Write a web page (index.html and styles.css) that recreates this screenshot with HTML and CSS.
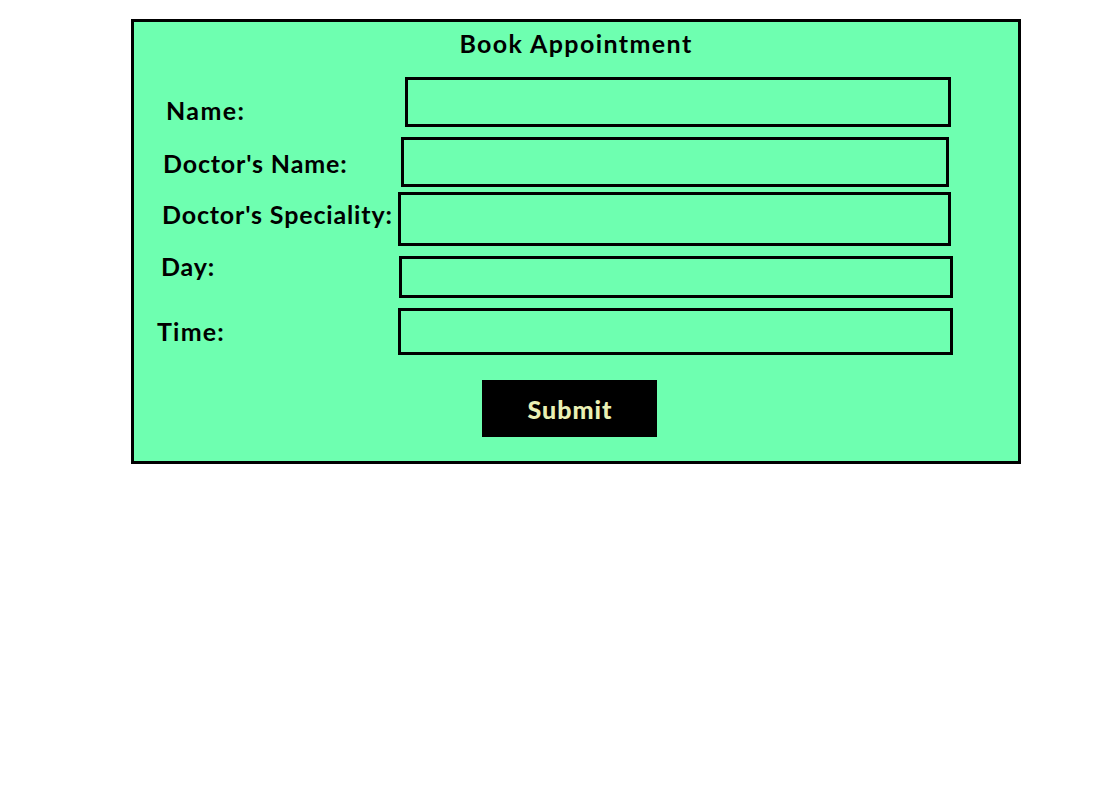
FILE: index.html
```html
<!DOCTYPE html>
<html>
<head>
<meta charset="utf-8">
<link rel="stylesheet" href="styles.css">
</head>
<body>
<div class="panel">
  <h1 class="title">Book Appointment</h1>
  <div class="row r1"><label class="label">Name:</label><div class="field"></div></div>
  <div class="row r2"><label class="label">Doctor's Name:</label><div class="field"></div></div>
  <div class="row r3"><label class="label">Doctor's Speciality:</label><div class="field"></div></div>
  <div class="row r4"><label class="label">Day:</label><div class="field"></div></div>
  <div class="row r5"><label class="label">Time:</label><div class="field"></div></div>
  <button class="submit" type="button">Submit</button>
</div>
</body>
</html>
```

FILE: styles.css
```css
html, body {
  margin: 0;
  padding: 0;
  background: #ffffff;
}
body {
  font-family: Lato, "Open Sans", sans-serif;
  font-weight: 700;
  color: #000;
}
.panel {
  box-sizing: border-box;
  margin: 19px 0 0 131px;
  width: 890px;
  height: 445px;
  border: 3px solid #000;
  background: #6effb0;
  display: flex;
  flex-direction: column;
  align-items: flex-start;
}
.title {
  align-self: center;
  margin: 6px 0 0 0;
  font-size: 25px;
  line-height: 30px;
  letter-spacing: 1.4px;
  font-weight: 700;
}
.row {
  display: flex;
  align-items: flex-start;
}
.label {
  box-sizing: border-box;
  font-size: 25px;
  line-height: 30px;
  letter-spacing: 0.85px;
  white-space: nowrap;
}
.field {
  box-sizing: border-box;
  border: 3px solid #000;
}
.r1 { margin-top: 19px; }
.r1 .label { width: 271px; padding: 18px 0 0 32px; letter-spacing: 1.4px; }
.r1 .field { width: 546px; height: 50px; }
.r2 { margin-top: 10px; }
.r2 .label { width: 267px; padding: 11px 0 0 29px; }
.r2 .field { width: 548px; height: 50px; }
.r3 { margin-top: 5px; }
.r3 .label { width: 264px; padding: 7px 0 0 28px; }
.r3 .field { width: 553px; height: 54px; }
.r4 { margin-top: 10px; }
.r4 .label { width: 265px; margin-top: -5px; padding: 0 0 0 27px; }
.r4 .field { width: 554px; height: 42px; }
.r5 { margin-top: 10px; }
.r5 .label { width: 264px; padding: 8px 0 0 23px; letter-spacing: 1.2px; }
.r5 .field { width: 555px; height: 47px; }
.submit {
  margin: 25px 0 0 348px;
  width: 175px;
  height: 57px;
  border: 0;
  padding: 0 0 0 1px;
  background: #000;
  color: #eaf0b4;
  font-family: Lato, "Open Sans", sans-serif;
  font-weight: 900;
  font-size: 25px;
  letter-spacing: 1px;
}
```
